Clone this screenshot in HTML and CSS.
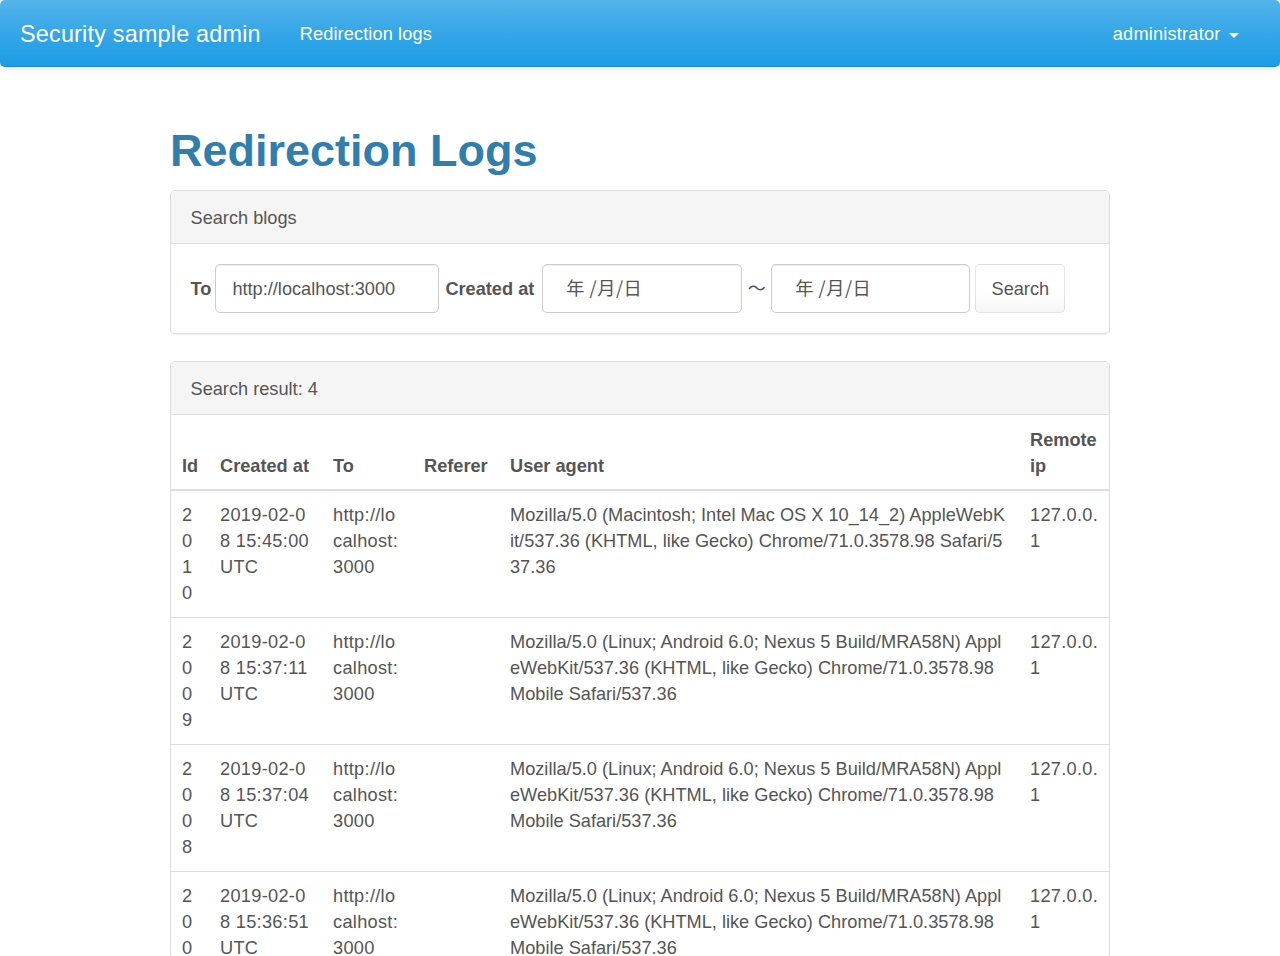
FILE: index.html
```html
<!DOCTYPE html>
<html lang="ja">
<head>
<meta charset="utf-8">
<title>Redirection Logs</title>
<link rel="stylesheet" href="styles.css">
</head>
<body>
<nav class="navbar">
  <a class="brand" href="#">Security sample admin</a>
  <a class="nav-link" href="#">Redirection logs</a>
  <a class="nav-link user" href="#">administrator <span class="caret"></span></a>
</nav>

<main class="container">
  <h1 class="title">Redirection Logs</h1>

  <section class="panel">
    <div class="panel-heading">Search blogs</div>
    <form class="panel-body search-form">
      <label class="label" for="to">To</label>
      <input class="field field-to" id="to" type="text" value="http://localhost:3000">
      <label class="label label-created" for="from">Created at</label>
      <input class="field field-date" id="from" type="text" value="年 /月/日">
      <span class="tilde">〜</span>
      <input class="field field-date field-date2" type="text" value="年 /月/日">
      <button class="btn" type="button">Search</button>
    </form>
  </section>

  <section class="panel">
    <div class="panel-heading">Search result: 4</div>
    <table class="table">
      <colgroup>
        <col class="c-id"><col class="c-created"><col class="c-to"><col class="c-ref"><col class="c-ua"><col class="c-ip">
      </colgroup>
      <thead>
        <tr><th>Id</th><th>Created at</th><th>To</th><th>Referer</th><th>User agent</th><th>Remote ip</th></tr>
      </thead>
      <tbody>
        <tr>
          <td>2010</td><td>2019-02-08 15:45:00 UTC</td><td>http://localhost:3000</td><td></td>
          <td class="ua">Mozilla/5.0 (Macintosh; Intel Mac OS X 10_14_2) AppleWebKit/537.36 (KHTML, like Gecko) Chrome/71.0.3578.98 Safari/537.36</td><td>127.0.0.1</td>
        </tr>
        <tr>
          <td>2009</td><td>2019-02-08 15:37:11 UTC</td><td>http://localhost:3000</td><td></td>
          <td class="ua">Mozilla/5.0 (Linux; Android 6.0; Nexus 5 Build/MRA58N) AppleWebKit/537.36 (KHTML, like Gecko) Chrome/71.0.3578.98 Mobile Safari/537.36</td><td>127.0.0.1</td>
        </tr>
        <tr>
          <td>2008</td><td>2019-02-08 15:37:04 UTC</td><td>http://localhost:3000</td><td></td>
          <td class="ua">Mozilla/5.0 (Linux; Android 6.0; Nexus 5 Build/MRA58N) AppleWebKit/537.36 (KHTML, like Gecko) Chrome/71.0.3578.98 Mobile Safari/537.36</td><td>127.0.0.1</td>
        </tr>
        <tr>
          <td>2007</td><td>2019-02-08 15:36:51 UTC</td><td>http://localhost:3000</td><td></td>
          <td class="ua">Mozilla/5.0 (Linux; Android 6.0; Nexus 5 Build/MRA58N) AppleWebKit/537.36 (KHTML, like Gecko) Chrome/71.0.3578.98 Mobile Safari/537.36</td><td>127.0.0.1</td>
        </tr>
      </tbody>
    </table>
  </section>
</main>
</body>
</html>
```

FILE: styles.css
```css
* { box-sizing: border-box; }

html, body {
  margin: 0;
  padding: 0;
  background: #fff;
}

body {
  font-family: "Liberation Sans", Arial, "Noto Sans CJK JP", sans-serif;
  font-size: 18.2px;
  line-height: 26px;
  color: #555;
}

a { text-decoration: none; }

/* Navbar */
.navbar {
  display: flex;
  align-items: center;
  height: 67px;
  padding: 2px 22px 0 0;
  background-image: linear-gradient(#54b4eb, #2fa4e7 60%, #1d9ce5);
  border-bottom: 1px solid #178acc;
  border-radius: 5px;
  box-shadow: 0 1px 10px rgba(0, 0, 0, 0.1);
  color: #fff;
}

.brand {
  color: #fff;
  font-size: 23.4px;
  letter-spacing: 0.2px;
  padding: 0 19.5px 0 20px;
  line-height: 26px;
}

.nav-link {
  color: #fff;
  font-size: 18.2px;
  letter-spacing: 0.1px;
  padding: 0 19.5px;
}

.nav-link.user {
  margin-left: auto;
  letter-spacing: 0.2px;
  display: flex;
  align-items: center;
}

.caret {
  display: inline-block;
  width: 0;
  height: 0;
  margin-left: 8px;
  margin-top: 2px;
  border-top: 5px solid #fff;
  border-left: 5px solid transparent;
  border-right: 5px solid transparent;
}

/* Layout */
.container {
  width: 940px;
  margin: 0 auto;
  padding-top: 58px;
}

.title {
  margin: 0 0 13px;
  font-size: 45px;
  line-height: 52px;
  font-weight: 700;
  color: #317eac;
}

/* Panels */
.panel {
  border: 1px solid #ddd;
  border-radius: 5px;
  margin-bottom: 27px;
  box-shadow: 0 1px 1px rgba(0, 0, 0, 0.05);
  overflow: hidden;
}

.panel-heading {
  background: #f5f5f5;
  border-bottom: 1px solid #ddd;
  padding: 14px 19.5px 12px;
  line-height: 26px;
  color: #555;
}

.panel-body {
  padding: 20px 19.5px 20px;
}

/* Search form */
.search-form {
  display: flex;
  align-items: center;
}

.label {
  font-weight: 700;
  margin-right: 4px;
}

.label-created {
  margin-left: 6px;
  margin-right: 8px;
}

.field {
  height: 49px;
  border: 1px solid #ccc;
  border-radius: 5px;
  box-shadow: inset 0 1px 1px rgba(0, 0, 0, 0.075);
  font-family: "Liberation Sans", Arial, "Noto Sans CJK JP", sans-serif;
  font-size: 18.2px;
  color: #555;
  padding: 1px 16px 0;
  background: #fff;
}

.field-to { width: 224px; }

.field-date {
  width: 200px;
  padding: 0 10px 4px 23px;
  font-family: "Noto Sans CJK JP", sans-serif;
  font-size: 18.2px;
  letter-spacing: 0.5px;
}

.field-date2 { width: 199px; }

.tilde {
  font-family: "Noto Sans CJK JP", sans-serif;
  font-size: 18px;
  width: 29px;
  padding-bottom: 3px;
  text-align: center;
  color: #555;
}

.btn {
  height: 49px;
  width: 90px;
  margin-left: 5px;
  border: 1px solid rgba(0, 0, 0, 0.1);
  border-radius: 5px;
  background-image: linear-gradient(#fff, #fff 60%, #f5f5f5);
  font-family: "Liberation Sans", Arial, sans-serif;
  font-size: 18.2px;
  color: #555;
  padding: 1px 0 0;
}

/* Table */
.table {
  width: 938px;
  border-collapse: collapse;
  table-layout: fixed;
}

.c-id { width: 38px; }
.c-created { width: 113px; }
.c-to { width: 91px; }
.c-ref { width: 86px; }
.c-ua { width: 520px; }
.c-ip { width: 90px; }

.table th,
.table td {
  padding: 11px 10px 11px 11px;
  text-align: left;
  line-height: 26px;
}

.table th {
  vertical-align: bottom;
  padding-top: 12px;
  padding-bottom: 10px;
  font-weight: 700;
  border-bottom: 2px solid #ddd;
}

.table td {
  vertical-align: top;
  word-break: break-all;
  letter-spacing: 0.3px;
  border-top: 1px solid #ddd;
}

.table td.ua {
  letter-spacing: 0;
}

.table tbody tr:first-child td { border-top: 0; }
```
